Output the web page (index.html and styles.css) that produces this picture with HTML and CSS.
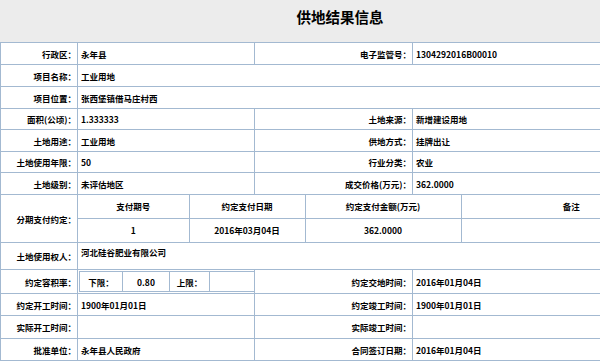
FILE: index.html
```html
<!DOCTYPE html>
<html lang="zh-CN">
<head>
<meta charset="utf-8">
<title>供地结果信息</title>
<link rel="stylesheet" href="styles.css">
</head>
<body>
<div class="page">
  <div class="head"><h1 class="title">供地结果信息</h1></div>
  <table class="info">
    <colgroup><col class="c1"><col class="c2"><col class="c3"><col class="c4"></colgroup>
    <tr class="r22"><td class="lab">行政区：</td><td class="val">永年县</td><td class="lab">电子监管号：</td><td class="val">1304292016B00010</td></tr>
    <tr class="r22"><td class="lab">项目名称：</td><td class="val" colspan="3">工业用地</td></tr>
    <tr class="r22"><td class="lab">项目位置：</td><td class="val" colspan="3">张西堡镇借马庄村西</td></tr>
    <tr class="r21"><td class="lab">面积(公顷)：</td><td class="val">1.333333</td><td class="lab">土地来源：</td><td class="val">新增建设用地</td></tr>
    <tr class="r22"><td class="lab">土地用途：</td><td class="val">工业用地</td><td class="lab">供地方式：</td><td class="val">挂牌出让</td></tr>
    <tr class="r21"><td class="lab">土地使用年限：</td><td class="val">50</td><td class="lab">行业分类：</td><td class="val">农业</td></tr>
    <tr class="r22"><td class="lab">土地级别：</td><td class="val">未评估地区</td><td class="lab">成交价格(万元)：</td><td class="val">362.0000</td></tr>
    <tr class="r47"><td class="lab">分期支付约定：</td><td class="sub" colspan="3">
      <table class="pay">
        <colgroup><col class="p1"><col class="p2"><col class="p3"><col class="p4"></colgroup>
        <tr class="ph"><td>支付期号</td><td>约定支付日期</td><td>约定支付金额(万元)</td><td>备注</td></tr>
        <tr class="pd"><td>1</td><td>2016年03月04日</td><td>362.0000</td><td></td></tr>
      </table>
    </td></tr>
    <tr class="r27"><td class="lab">土地使用权人：</td><td class="val top" colspan="3">河北硅谷肥业有限公司</td></tr>
    <tr class="r24"><td class="lab">约定容积率：</td><td class="sub">
      <table class="far">
        <colgroup><col class="f1"><col class="f2"><col class="f3"><col class="f4"></colgroup>
        <tr><td>下限：</td><td>0.80</td><td>上限：</td><td></td></tr>
      </table>
    </td><td class="lab">约定交地时间：</td><td class="val">2016年01月04日</td></tr>
    <tr class="r22"><td class="lab">约定开工时间：</td><td class="val">1900年01月01日</td><td class="lab">约定竣工时间：</td><td class="val">1900年01月01日</td></tr>
    <tr class="r23"><td class="lab">实际开工时间：</td><td class="val"></td><td class="lab">实际竣工时间：</td><td class="val"></td></tr>
    <tr class="r22"><td class="lab">批准单位：</td><td class="val">永年县人民政府</td><td class="lab">合同签订日期：</td><td class="val">2016年01月04日</td></tr>
  </table>
</div>
</body>
</html>
```
FILE: styles.css
```css
html, body {
  margin: 0;
  padding: 0;
  background: #ffffff;
}
body {
  font-family: "Noto Sans CJK SC", "Liberation Sans", sans-serif;
  font-size: 8.5px;
  color: #000;
}
.page {
  width: 680px;
}
.head {
  height: 42px;
  background: #ececec;
  display: flex;
  align-items: center;
  justify-content: center;
}
.title {
  margin: 0;
  font-size: 14.5px;
  font-weight: bold;
  line-height: 1;
  padding-bottom: 8px;
}
table {
  border-collapse: collapse;
  table-layout: fixed;
}
.info {
  width: 680px;
}
.c1 { width: 77px; }
.c2 { width: 177px; }
.c3 { width: 158px; }
.c4 { width: 268px; }
.info > tbody > tr > td {
  border: 1px solid #a3b9d1;
  padding: 0 3px;
  font-weight: bold;
  line-height: 12px;
  white-space: nowrap;
  overflow: hidden;
}
.info > tbody > tr > td.lab {
  text-align: right;
  padding-right: 1px;
}
.info > tbody > tr > td.sub {
  padding: 0;
}
.info > tbody > tr > td.top {
  vertical-align: top;
  padding-top: 3px;
}
.r21 { height: 21px; }
.r22 { height: 22px; }
.r23 { height: 23px; }
.r24 { height: 24px; }
.r27 { height: 27px; }
.r47 { height: 47px; }
.pay {
  width: 603px;
  margin: 0;
}
.p1 { width: 111px; }
.p2 { width: 116px; }
.p3 { width: 156px; }
.p4 { width: 220px; }
.pay td {
  border: 1px solid #a3b9d1;
  text-align: center;
  font-weight: bold;
  line-height: 12px;
  padding: 0;
}
.pay tr:first-child td { border-top: none; }
.pay tr:last-child td { border-bottom: none; }
.pay td:first-child { border-left: none; }
.pay td:last-child { border-right: none; }
.ph { height: 23px; }
.pd { height: 24px; }
.far {
  width: 175px;
  margin: 1px;
  border-collapse: separate;
  border-spacing: 0;
  border: 1px solid #a3b9d1;
}
.f1 { width: 43px; }
.f2 { width: 47px; }
.f3 { width: 40px; }
.f4 { width: 44px; }
.far td {
  height: 19px;
  padding: 0;
  text-align: center;
  font-weight: bold;
  line-height: 12px;
  border-right: 1px solid #a3b9d1;
}
.far td:last-child { border-right: none; }
```
